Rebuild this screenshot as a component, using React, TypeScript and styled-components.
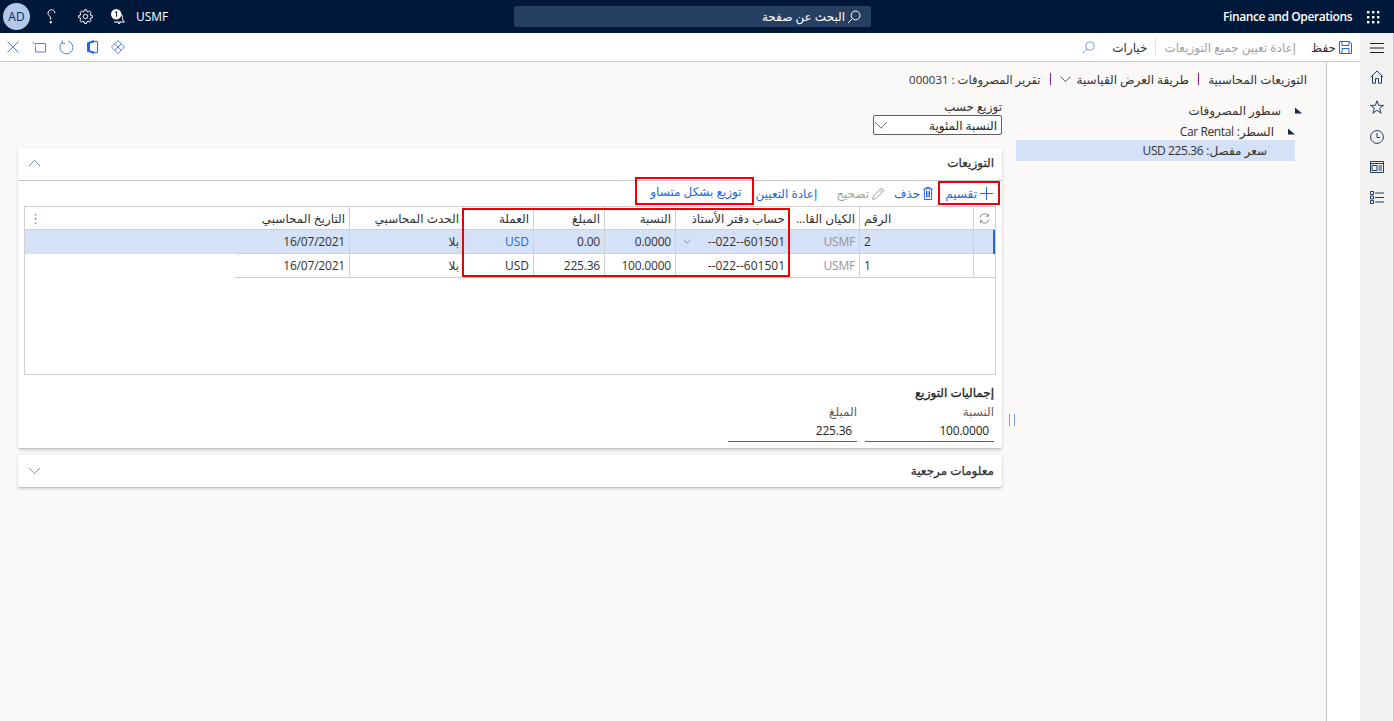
import React from "react";
import styled, { createGlobalStyle } from "styled-components";

const BLUE = "#2266e3";

const GlobalStyle = createGlobalStyle`
  html, body {
    margin: 0;
    padding: 0;
    height: 100%;
    overflow: hidden;
    background: #ffffff;
  }
  * { box-sizing: border-box; }
  body {
    font-family: "Open Sans", "DejaVu Sans", sans-serif;
    font-size: 12px;
    color: #323130;
  }
`;

const Icon = styled.svg.attrs({ fill: "none", stroke: "currentColor", strokeWidth: 1 })`
  display: block;
  flex: none;
`;

const GridDots = () => (
  <svg width="14" height="14" viewBox="0 0 14 14" fill="#fff">
    {[1, 6, 11].map((y) =>
      [1, 6, 11].map((x) => <rect key={`${x}-${y}`} x={x} y={y} width="2.4" height="2.4" />)
    )}
  </svg>
);

const Lens = ({ size = 14 }: { size?: number }) => (
  <Icon width={size} height={size} viewBox="0 0 14 14">
    <circle cx="8.6" cy="5.4" r="4.4" />
    <path d="M5.4 8.6 1 13" />
  </Icon>
);

const Chevron = ({ up, size = 14 }: { up?: boolean; size?: number }) => (
  <Icon width={size} height={size * 0.6} viewBox="0 0 14 8.4">
    <path d={up ? "M1 7.6 7 1.4l6 6.2" : "M1 1l6 6.2L13 1"} />
  </Icon>
);

const Save = () => (
  <Icon width="13" height="13" viewBox="0 0 13 13">
    <path d="M.5.5h10l2 2v10H.5z" />
    <path d="M3 .5v4h7v-4M3 12.5v-5h7v5" />
  </Icon>
);

const Plus = () => (
  <Icon width="13" height="13" viewBox="0 0 13 13">
    <path d="M6.5 0v13M0 6.5h13" />
  </Icon>
);

const Trash = () => (
  <Icon width="10" height="13" viewBox="0 0 10 13">
    <path d="M.5 2h9M3 2V.5h4V2M1.4 2v10.5h7.2V2M3.5 4v6.5M5 4v6.5M6.5 4v6.5" />
  </Icon>
);

const Pencil = () => (
  <Icon width="13" height="13" viewBox="0 0 13 13">
    <path d="M9.5 1 12 3.5 4 11.5l-3.3.8.8-3.3zM8 2.5 10.5 5" />
  </Icon>
);

const Refresh = () => (
  <Icon width="11" height="11" viewBox="0 0 11 11">
    <path d="M1 4.4A4.6 4.6 0 0 1 9.4 3M10 6.6A4.6 4.6 0 0 1 1.6 8" />
    <path d="M9.6.8v2.4H7.2M1.4 10.2V7.8h2.4" />
  </Icon>
);

const HelpMark = () => (
  <Icon width="9" height="15" viewBox="0 0 9 15">
    <path d="M7.8 4.2C8 2 6.4.7 4.6.7 2.6.7 1 2.2 1 4.2c0 1.9 1.6 2.5 2.3 3.7.4.7.4 1.6.4 2.7" />
    <circle cx="3.8" cy="13.2" r=".8" fill="currentColor" />
  </Icon>
);

const Gear = () => (
  <Icon width="15" height="15" viewBox="0 0 15 15">
    <circle cx="7.5" cy="7.5" r="2.2" />
    <path d="M6.4.8h2.2l.3 1.7 1.2.5 1.4-1 1.6 1.6-1 1.4.5 1.2 1.7.3v2.2l-1.7.3-.5 1.2 1 1.4-1.6 1.6-1.4-1-1.2.5-.3 1.7H6.4l-.3-1.7-1.2-.5-1.4 1-1.6-1.6 1-1.4-.5-1.2L.7 8.7V6.5l1.7-.3.5-1.2-1-1.4 1.6-1.6 1.4 1 1.2-.5z" />
  </Icon>
);

const Bell = () => (
  <svg width="16" height="16" viewBox="0 0 16 16">
    <path d="M9 4.5c1.8.4 2.4 2 2.4 4 0 2 .6 3 2.1 4.5H3" fill="none" stroke="#fff" />
    <path d="M6.4 13.5c.3 1.3 2.9 1.3 3.2 0" fill="none" stroke="#fff" />
    <circle cx="5.2" cy="5.2" r="5.2" fill="#fff" />
    <path d="M4.2 3.5 5.6 2.6v5.2" fill="none" stroke="#00183a" />
  </svg>
);

const Close = () => (
  <Icon width="12" height="12" viewBox="0 0 12 12">
    <path d="M.5.5l11 11M11.5.5l-11 11" />
  </Icon>
);

const OpenBox = () => (
  <Icon width="14" height="12" viewBox="0 0 14 12">
    <path d="M3.5 2.5h10v8.5H3.5V5.5" />
    <path d="M.5 1l3.5 3" />
  </Icon>
);

const Reload = () => (
  <Icon width="15" height="15" viewBox="0 0 15 15">
    <path d="M9.2 1.1a6.5 6.5 0 1 1-5.6 1" />
    <path d="M3.2.4v3h3" />
  </Icon>
);

const Office = () => (
  <svg width="11" height="14" viewBox="0 0 11 14">
    <path d="M0 2.6 7 0v14l-7-2.4z" fill={BLUE} />
    <path d="M7 1.4h3.5v11.2H7" fill="none" stroke={BLUE} />
    <path d="M3 3.6 7 2.4v9.2l-4-1z" fill="#fff" />
  </svg>
);

const PowerDiamond = () => (
  <Icon width="14" height="14" viewBox="0 0 14 14">
    <path d="M7 .5 13.5 7 7 13.500.5 7z" />
    <path d="M3.75 3.75 10.250 10.250M10.250 3.750 3.750 10.250" />
  </Icon>
);

const Hamburger = () => (
  <Icon width="14" height="10" viewBox="0 0 14 10">
    <path d="M0 .5h14M0 5h14M0 9.5h14" />
  </Icon>
);

const Home = () => (
  <Icon width="14" height="14" viewBox="0 0 14 14">
    <path d="M.8 7 7 1l6.2 6" />
    <path d="M2.5 5.6v7.6h3V8.6h3v4.6h3V5.6" />
  </Icon>
);

const Star = () => (
  <Icon width="14" height="14" viewBox="0 0 14 14">
    <path d="M7 .8l1.7 4.6h4.8L9.6 8.3l1.5 4.9L7 10.3l-4.1 2.9 1.5-4.9L.5 5.4h4.8z" />
  </Icon>
);

const Clock = () => (
  <Icon width="14" height="14" viewBox="0 0 14 14">
    <circle cx="7" cy="7" r="6.4" />
    <path d="M7 3v4.5h3" />
  </Icon>
);

const Workspace = () => (
  <Icon width="14" height="12" viewBox="0 0 14 12">
    <path d="M.5.5h13v11H.5zM.5 2.5h13" />
    <path d="M2 4.5h5v5H2zM8.500 5h3.500M8.500 7h3.500M8.500 9h3.500" />
  </Icon>
);

const ListIcon = () => (
  <Icon width="14" height="13" viewBox="0 0 14 13">
    <path d="M.5.5h3v3h-3zM.5 5h3v3h-3zM.5 9.5h3v3h-3zM5 2h9M5 6.5h9M5 11h9" />
  </Icon>
);

const Page = styled.div`
  width: 1394px;
  height: 721px;
  display: flex;
  flex-direction: column;
  overflow: hidden;
`;

const TopBar = styled.header`
  height: 33px;
  flex: none;
  background: #00183a;
  color: #ffffff;
  display: flex;
  align-items: center;
`;

const Waffle = styled.div`
  width: 42px;
  height: 33px;
  display: flex;
  align-items: center;
  justify-content: center;
`;

const AppTitle = styled.div`
  width: 129px;
  font-size: 12px;
  font-weight: 600;
  letter-spacing: -0.4px;
  direction: ltr;
  white-space: nowrap;
`;

const SearchSlot = styled.div`
  flex: 1;
  display: flex;
  padding-right: 352px;
`;

const SearchBox = styled.div`
  width: 357px;
  height: 21px;
  background: #273f63;
  border-radius: 2px;
  display: flex;
  align-items: center;
  gap: 2px;
  padding-right: 10px;
  color: #ffffff;
`;

const TopActions = styled.div`
  display: flex;
  align-items: center;
  padding-left: 3px;
`;

const Company = styled.span`
  direction: ltr;
`;

const TopIcon = styled.div`
  width: 34px;
  display: flex;
  justify-content: center;
`;

const Avatar = styled.div`
  width: 27px;
  height: 27px;
  margin-right: 4px;
  border-radius: 50%;
  background: #b3c7ea;
  color: #12274a;
  display: flex;
  align-items: center;
  justify-content: center;
`;

const Shell = styled.div`
  flex: 1;
  display: flex;
  min-height: 0;
`;

const NavRail = styled.nav`
  width: 34px;
  flex: none;
  background: #f3f2f1;
  border-right: 1px solid #c8c6c4;
  color: #1f3b66;
  display: flex;
  flex-direction: column;
  align-items: center;
  padding-top: 8px;
  gap: 16px;
`;

const NavItem = styled.div`
  height: 14px;
  display: flex;
  align-items: center;
  justify-content: center;

  &:first-child {
    margin-bottom: -1px;
    color: #201f1e;
  }
`;

const Workarea = styled.div`
  flex: 1;
  display: flex;
  flex-direction: column;
  min-width: 0;
`;

const ActionBar = styled.div`
  height: 29px;
  flex: none;
  background: #ffffff;
  border-bottom: 1px solid #c8c6c4;
  display: flex;
  align-items: center;
  padding: 0 8px 0 7px;
`;

const ActionItem = styled.div<{ $muted?: boolean; $space?: number }>`
  display: flex;
  align-items: center;
  gap: 3px;
  margin-right: ${(p) => p.$space ?? 0}px;
  color: ${(p) => (p.$muted ? "#a19f9d" : "#323130")};
  white-space: nowrap;
`;

const ActionIconBlue = styled.span`
  color: ${BLUE};
  display: flex;
`;

const ActionDivider = styled.div`
  width: 1px;
  height: 18px;
  background: #e1dfdd;
  margin: 0 8px;
`;

const ActionSearch = styled.span`
  color: #6f92e6;
  margin-right: 17px;
  display: flex;
`;

const ActionIcons = styled.div`
  margin-right: auto;
  display: flex;
  flex-direction: row-reverse;
  align-items: center;
  gap: 13px;
  color: #5b7fe0;
`;

const WorkBody = styled.div`
  flex: 1;
  display: flex;
  min-height: 0;
`;

const SidePane = styled.div`
  width: 34px;
  flex: none;
  background: #ffffff;
  border-left: 1px solid #c8c6c4;
`;

const Main = styled.main`
  flex: 1;
  background: #faf9f8;
  min-width: 0;
`;

const Breadcrumb = styled.div`
  display: flex;
  align-items: center;
  gap: 6px;
  height: 20px;
  margin-top: 7px;
  padding-right: 19px;
`;

const BreadcrumbBar = styled.span`
  width: 1px;
  height: 12px;
  margin: 0 3px;
  background: #7a1f8a;
`;

const BreadcrumbTail = styled.span`
  font-size: 11.5px;
`;

const Columns = styled.div`
  display: flex;
  padding: 0 24px 0 18px;
  margin-top: 11px;
`;

const Tree = styled.div`
  width: 286px;
  flex: none;
`;

const TreeRow = styled.div<{ $indent: number; $selected?: boolean }>`
  height: 21px;
  display: flex;
  align-items: center;
  gap: 14px;
  margin-right: ${(p) => (p.$selected ? 7 : p.$indent * 7)}px;
  padding-right: ${(p) => (p.$selected ? 28 : 0)}px;
  background: ${(p) => (p.$selected ? "#d5e1f7" : "transparent")};
  margin-top: ${(p) => (p.$selected ? -2 : 0)}px;
  white-space: nowrap;
`;

const TreeText = styled.span``;

const LatinRun = styled.span`
  letter-spacing: -0.4px;
`;

const Triangle = styled.span`
  width: 7px;
  height: 6px;
  background: #1b2a41;
  clip-path: polygon(0 0, 100% 100%, 0 100%);
`;

const Splitter = styled.div`
  width: 14px;
  flex: none;
  padding: 314px 0 0 5px;
  display: flex;
  justify-content: center;

  &::before {
    content: "";
    width: 4px;
    height: 12px;
    border-left: 1px solid #6fa0e8;
    border-right: 1px solid #6fa0e8;
  }
`;

const FormColumn = styled.div`
  flex: 1;
  min-width: 0;
`;

const FieldLabel = styled.div`
  height: 14px;
  line-height: 14px;
`;

const Select = styled.div`
  width: 129px;
  height: 20px;
  margin-top: 1px;
  background: #ffffff;
  border: 1px solid #605e5c;
  border-radius: 2px;
  display: flex;
  align-items: center;
  justify-content: space-between;
  padding-right: 4px;
  color: #201f1e;

  svg {
    color: #5b6b82;
  }
`;

const Card = styled.section`
  background: #ffffff;
  border-radius: 2px;
  box-shadow: 0 1.6px 3.6px rgba(0, 0, 0, 0.16), 0 0.3px 0.9px rgba(0, 0, 0, 0.1);
  margin-top: 13px;

  & + & {
    margin-top: 7px;
  }
`;

const CardHeader = styled.div<{ $open?: boolean }>`
  height: ${(p) => (p.$open ? 33 : 32)}px;
  display: flex;
  align-items: center;
  justify-content: space-between;
  padding: 0 8px ${(p) => (p.$open ? 3 : 1)}px;
  border-bottom: ${(p) => (p.$open ? "1px solid #c8c6c4" : "none")};
  -webkit-text-stroke: 0.25px currentColor;
`;

const CardChevron = styled.span<{ $tone: string }>`
  color: ${(p) => p.$tone};
  display: flex;
  margin-left: 2px;
`;

const Toolbar = styled.div`
  height: 25px;
  display: flex;
  align-items: stretch;
  position: relative;
`;

const ToolButton = styled.div<{ $boxed?: boolean; $muted?: boolean; $tall?: boolean; $space: number }>`
  display: flex;
  align-items: center;
  gap: 3px;
  margin-right: ${(p) => p.$space}px;
  color: ${(p) => (p.$muted ? "#a19f9d" : BLUE)};
  border: ${(p) => (p.$boxed ? "2px solid #f00000" : "none")};
  padding: ${(p) => (p.$tall ? "0 10px 0 13px" : p.$boxed ? "0 5px 0 5px" : "0")};
  margin-top: ${(p) => (p.$tall ? "-4px" : "0")};
  margin-bottom: 1px;
  white-space: nowrap;
`;

const GridFrame = styled.div`
  position: relative;
  margin: 0 6px;
  height: 169px;
  border: 1px solid #d2d0ce;
`;

const GridRow = styled.div<{ $head?: boolean; $selected?: boolean }>`
  display: grid;
  grid-template-columns: 22px 114px 70px 114px 71px 71px 70px 114px 114px 1fr;
  height: ${(p) => (p.$head ? 23 : 24)}px;
  background: ${(p) => (p.$selected ? "#d5e1f7" : "transparent")};
  position: relative;
`;

const Cell = styled.div<{
  $muted?: boolean;
  $link?: boolean;
  $blank?: boolean;
  $open?: boolean;
  $left?: boolean;
  $tight?: boolean;
}>`
  display: flex;
  align-items: center;
  justify-content: ${(p) => (p.$left ? "flex-end" : "space-between")};
  padding: 0 4px;
  border-left: ${(p) => (p.$blank || p.$open ? "none" : "1px solid #d2d0ce")};
  border-bottom: ${(p) => (p.$blank ? "none" : "1px solid #d2d0ce")};
  color: ${(p) => (p.$muted ? "#979593" : p.$link ? BLUE : "#323130")};
  letter-spacing: ${(p) => (p.$tight ? "-0.2px" : "normal")};
  white-space: nowrap;
  overflow: hidden;
  min-width: 0;
`;

const HeadFill = styled(Cell)`
  justify-content: flex-end;
  border-left: none;
  color: #8a8886;
  font-size: 13px;
`;

const RowMarker = styled.span`
  position: absolute;
  right: 0;
  top: 0;
  bottom: 0;
  width: 2px;
  background: ${BLUE};
`;

const CellChevron = styled.span`
  color: #605e5c;
  display: flex;
  margin-left: 3px;
`;

const SyncCell = styled(Cell)`
  justify-content: center;
  color: #8a8886;
`;

const GridHighlight = styled.div`
  position: absolute;
  left: 437px;
  top: 1px;
  width: 328px;
  height: 69px;
  border: 2px solid #f00000;
  pointer-events: none;
`;

const Totals = styled.div`
  padding: 10px 8px 6px;
`;

const TotalsTitle = styled.div`
  height: 16px;
  line-height: 16px;
  color: #201f1e;
  -webkit-text-stroke: 0.3px currentColor;
`;

const TotalsFields = styled.div`
  display: flex;
  gap: 8px;
  margin-top: 4px;
`;

const TotalField = styled.div`
  width: 129px;
`;

const TotalLabel = styled.div`
  height: 14px;
  line-height: 14px;
  color: #605e5c;
`;

const TotalValue = styled.div`
  height: 23px;
  border-bottom: 1px solid #605e5c;
  display: flex;
  align-items: center;
  padding-right: 5px;
  color: #201f1e;
  letter-spacing: -0.2px;
`;

const rows = [
  { id: "2", percent: "0.0000", amount: "0.00", selected: true },
  { id: "1", percent: "100.0000", amount: "225.36", selected: false },
];

const App = () => {
  return (
    <Page dir="rtl">
      <GlobalStyle />
      <TopBar>
        <Waffle>
          <GridDots />
        </Waffle>
        <AppTitle>Finance and Operations</AppTitle>
        <SearchSlot>
          <SearchBox>
            <Lens />
            <span>البحث عن صفحة</span>
          </SearchBox>
        </SearchSlot>
        <TopActions>
          <Company>USMF</Company>
          <TopIcon>
            <Bell />
          </TopIcon>
          <TopIcon>
            <Gear />
          </TopIcon>
          <TopIcon>
            <HelpMark />
          </TopIcon>
          <Avatar>AD</Avatar>
        </TopActions>
      </TopBar>
      <Shell>
        <NavRail>
          <NavItem>
            <Hamburger />
          </NavItem>
          <NavItem>
            <Home />
          </NavItem>
          <NavItem>
            <Star />
          </NavItem>
          <NavItem>
            <Clock />
          </NavItem>
          <NavItem>
            <Workspace />
          </NavItem>
          <NavItem>
            <ListIcon />
          </NavItem>
        </NavRail>
        <Workarea>
          <ActionBar>
            <ActionItem>
              <ActionIconBlue>
                <Save />
              </ActionIconBlue>
              حفظ
            </ActionItem>
            <ActionItem $muted $space={15}>
              إعادة تعيين جميع التوزيعات
            </ActionItem>
            <ActionDivider />
            <ActionItem>خيارات</ActionItem>
            <ActionSearch>
              <Lens size={13} />
            </ActionSearch>
            <ActionIcons>
              <Close />
              <OpenBox />
              <Reload />
              <Office />
              <PowerDiamond />
            </ActionIcons>
          </ActionBar>
          <WorkBody>
            <SidePane />
            <Main>
              <Breadcrumb>
                <span>التوزيعات المحاسبية</span>
                <BreadcrumbBar />
                <span>طريقة العرض القياسية</span>
                <Chevron size={11} />
                <BreadcrumbBar />
                <BreadcrumbTail>تقرير المصروفات : 000031</BreadcrumbTail>
              </Breadcrumb>
              <Columns>
                <Tree>
                  <TreeRow $indent={0}>
                    <Triangle />
                    <TreeText>سطور المصروفات</TreeText>
                  </TreeRow>
                  <TreeRow $indent={1}>
                    <Triangle />
                    <TreeText>
                      السطر: <LatinRun>Car Rental</LatinRun>
                    </TreeText>
                  </TreeRow>
                  <TreeRow $indent={2} $selected>
                    <TreeText>
                      سعر مفصل: <LatinRun>USD 225.36</LatinRun>
                    </TreeText>
                  </TreeRow>
                </Tree>
                <Splitter />
                <FormColumn>
                  <FieldLabel>توزيع حسب</FieldLabel>
                  <Select>
                    <span>النسبة المئوية</span>
                    <Chevron />
                  </Select>
                  <Card>
                    <CardHeader $open>
                      <span>التوزيعات</span>
                      <CardChevron $tone="#5f7ea6">
                        <Chevron up size={13} />
                      </CardChevron>
                    </CardHeader>
                    <Toolbar>
                      <ToolButton $boxed $space={2}>
                        <Plus />
                        تقسيم
                      </ToolButton>
                      <ToolButton $space={5}>
                        <Trash />
                        حذف
                      </ToolButton>
                      <ToolButton $muted $space={9}>
                        <Pencil />
                        تصحيح
                      </ToolButton>
                      <ToolButton $space={19}>إعادة التعيين</ToolButton>
                      <ToolButton $boxed $tall $space={2}>
                        توزيع بشكل متساو
                      </ToolButton>
                    </Toolbar>
                    <GridFrame>
                      <GridRow $head>
                        <SyncCell>
                          <Refresh />
                        </SyncCell>
                        <Cell $left>الرقم</Cell>
                        <Cell>الكيان القا...</Cell>
                        <Cell>حساب دفتر الأستاذ</Cell>
                        <Cell>النسبة</Cell>
                        <Cell>المبلغ</Cell>
                        <Cell>العملة</Cell>
                        <Cell>الحدث المحاسبي</Cell>
                        <Cell $open>التاريخ المحاسبي</Cell>
                        <HeadFill>⋮</HeadFill>
                      </GridRow>
                      {rows.map((row) => (
                        <GridRow key={row.id} $selected={row.selected}>
                          <Cell />
                          <Cell $left>{row.id}</Cell>
                          <Cell $muted $tight>
                            USMF
                          </Cell>
                          <Cell>
                            <span>601501--022--</span>
                            {row.selected && (
                              <CellChevron>
                                <Chevron size={8} />
                              </CellChevron>
                            )}
                          </Cell>
                          <Cell $tight>{row.percent}</Cell>
                          <Cell $tight>{row.amount}</Cell>
                          <Cell $link={row.selected}>USD</Cell>
                          <Cell>بلا</Cell>
                          <Cell $open $tight>
                            16/07/2021
                          </Cell>
                          <Cell $blank />
                          {row.selected && <RowMarker />}
                        </GridRow>
                      ))}
                      <GridHighlight />
                    </GridFrame>
                    <Totals>
                      <TotalsTitle>إجماليات التوزيع</TotalsTitle>
                      <TotalsFields>
                        <TotalField>
                          <TotalLabel>النسبة</TotalLabel>
                          <TotalValue>100.0000</TotalValue>
                        </TotalField>
                        <TotalField>
                          <TotalLabel>المبلغ</TotalLabel>
                          <TotalValue>225.36</TotalValue>
                        </TotalField>
                      </TotalsFields>
                    </Totals>
                  </Card>
                  <Card>
                    <CardHeader>
                      <span>معلومات مرجعية</span>
                      <CardChevron $tone="#8a8a90">
                        <Chevron size={13} />
                      </CardChevron>
                    </CardHeader>
                  </Card>
                </FormColumn>
              </Columns>
            </Main>
          </WorkBody>
        </Workarea>
      </Shell>
    </Page>
  );
};

export default App;
